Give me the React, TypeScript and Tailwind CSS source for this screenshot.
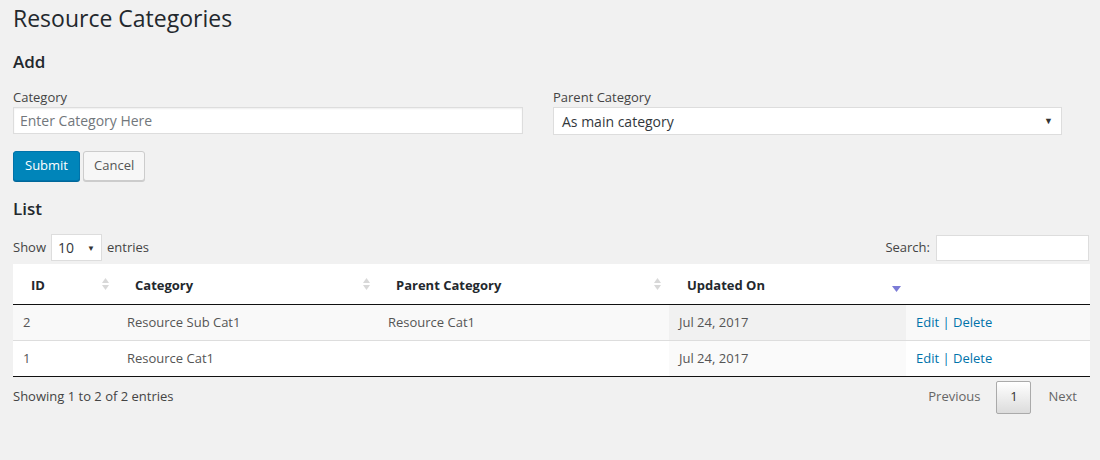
import { ReactNode } from 'react';

const font = { fontFamily: '"Open Sans", "Noto Sans", sans-serif' };

function SortIcon({ active }: { active?: boolean }) {
    if (active) {
        return (
            <svg width="9" height="8" viewBox="0 0 9 8" className="absolute right-[5px] top-[21px]">
                <path d="M0 1 L9 1 L4.5 7 Z" fill="#7b7bd6" />
            </svg>
        );
    }
    return (
        <svg width="7" height="14" viewBox="0 0 7 14" className="absolute right-[8px] top-[13px]">
            <path d="M0 6 L7 6 L3.5 1 Z" fill="#d8d8d8" />
            <path d="M0 8 L7 8 L3.5 13 Z" fill="#d8d8d8" />
        </svg>
    );
}

function Th({ children, w, sort, active }: { children?: ReactNode; w: string; sort?: boolean; active?: boolean }) {
    return (
        <th className={`relative ${w} h-[40px] px-[18px] pt-[3px] text-left font-bold text-[13px] text-[#23282d]`}>
            {children}
            {sort && <SortIcon active={active} />}
        </th>
    );
}

const rows = [
    { id: '2', name: 'Resource Sub Cat1', parent: 'Resource Cat1', updated: 'Jul 24, 2017' },
    { id: '1', name: 'Resource Cat1', parent: '', updated: 'Jul 24, 2017' },
];

export default function App() {
    return (
        <div className="w-[1100px] h-[460px] bg-[#f1f1f1] px-[13px] text-[#444] text-[13px]" style={font}>
            <h1 className="pt-[4px] text-[23px] leading-[29px] font-normal text-[#23282d]">Resource Categories</h1>

            <h2 className="mt-[18px] text-[17px] leading-[22px] font-semibold text-[#23282d]">Add</h2>

            <div className="mt-[15px] flex gap-[30px]">
                <div className="w-[510px]">
                    <label className="block leading-[18px] text-[#444]">Category</label>
                    <input
                        type="text"
                        placeholder="Enter Category Here"
                        className="mt-[1px] block w-[510px] h-[27px] px-[6px] bg-white border border-[#ddd] shadow-[inset_0_1px_2px_rgba(0,0,0,0.07)] text-[14px] placeholder:text-[#72777c] outline-none"
                    />
                </div>
                <div className="w-[509px]">
                    <label className="block leading-[18px] text-[#444]">Parent Category</label>
                    <div className="mt-[1px] flex items-center justify-between w-[509px] h-[28px] px-[8px] bg-white border border-[#ddd] text-[14px] text-[#32373c]">
                        <span>As main category</span>
                        <span className="text-[9px] text-[#333]">▼</span>
                    </div>
                </div>
            </div>

            <div className="mt-[16px] flex gap-[3px]">
                <button className="h-[30px] px-[11px] rounded-[3px] bg-[#0085ba] border border-[#0073aa] shadow-[0_1px_0_#006799] text-white text-[13px]">Submit</button>
                <button className="h-[30px] px-[10px] rounded-[3px] bg-[#f7f7f7] border border-[#ccc] shadow-[0_1px_0_#ccc] text-[#555] text-[13px]">Cancel</button>
            </div>

            <h2 className="mt-[17px] text-[17px] leading-[22px] font-semibold text-[#23282d]">List</h2>

            <div className="mt-[14px] w-[1077px] flex items-end justify-between">
                <div className="flex items-center gap-[5px]">
                    <span>Show</span>
                    <div className="flex items-center justify-between w-[51px] h-[27px] pl-[6px] pr-[6px] bg-white border border-[#ddd] text-[14px] text-[#32373c]">
                        <span>10</span>
                        <span className="text-[8px] text-[#333]">▼</span>
                    </div>
                    <span>entries</span>
                </div>
                <div className="flex items-center gap-[6px]">
                    <span>Search:</span>
                    <input type="text" className="mr-[1px] w-[153px] h-[26px] bg-white border border-[#ddd] outline-none" />
                </div>
            </div>

            <table className="mt-[3px] w-[1077px] border-collapse">
                <thead className="bg-white">
                    <tr className="border-b border-[#111]">
                        <Th w="w-[104px]" sort>ID</Th>
                        <Th w="w-[261px]" sort>Category</Th>
                        <Th w="w-[291px]" sort>Parent Category</Th>
                        <Th w="w-[237px]" sort active>Updated On</Th>
                        <Th w="w-[184px]" />
                    </tr>
                </thead>
                <tbody className="text-[#555]">
                    {rows.map((r, i) => {
                        const odd = i % 2 === 0;
                        return (
                            <tr key={r.id} className={`${odd ? 'bg-[#f9f9f9] border-b border-[#ddd]' : 'bg-white border-b border-[#111]'} h-[36px]`}>
                                <td className="px-[10px] pt-[2px]">{r.id}</td>
                                <td className="px-[10px] pt-[2px]">{r.name}</td>
                                <td className="px-[10px] pt-[2px]">{r.parent}</td>
                                <td className={`px-[10px] pt-[2px] ${odd ? 'bg-[#f1f1f1]' : 'bg-[#fafafa]'}`}>{r.updated}</td>
                                <td className="px-[10px] pt-[2px] text-[#0073aa]">
                                    <span>Edit</span> | <span>Delete</span>
                                </td>
                            </tr>
                        );
                    })}
                </tbody>
            </table>

            <div className="mt-[4px] w-[1077px] flex items-center justify-between">
                <span>Showing 1 to 2 of 2 entries</span>
                <div className="flex items-center text-[#666]">
                    <span className="px-[10px]">Previous</span>
                    <span className="mx-[6px] w-[35px] h-[33px] flex items-center justify-center rounded-[2px] border border-[#aaa] bg-gradient-to-b from-white to-[#dcdcdc] text-[#333]">1</span>
                    <span className="pl-[11px] pr-[13px]">Next</span>
                </div>
            </div>
        </div>
    );
}
